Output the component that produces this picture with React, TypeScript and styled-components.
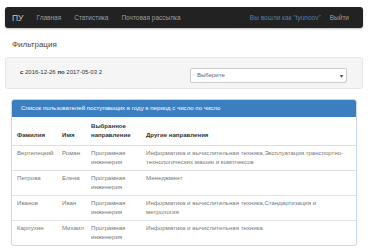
import styled, { createGlobalStyle } from "styled-components";

const GlobalStyle = createGlobalStyle`
  html, body {
    margin: 0;
    padding: 0;
    background: #ffffff;
  }

  body {
    font-family: "Liberation Sans", Arial, sans-serif;
    color: #333333;
  }
`;

interface Applicant {
  lastName: string;
  firstName: string;
  chosen: string;
  other: string;
}

const applicants: Applicant[] = [
  {
    lastName: "Вертелецкий",
    firstName: "Роман",
    chosen: "Програмная инженерия",
    other:
      "Информатика и вычислительная техника,Эксплуатация транспортно-технологических машин и комплексов",
  },
  {
    lastName: "Петрова",
    firstName: "Елена",
    chosen: "Програмная инженерия",
    other: "Менеджмент",
  },
  {
    lastName: "Иванов",
    firstName: "Иван",
    chosen: "Програмная инженерия",
    other: "Информатика и вычислительная техника,Стандартизация и метрология",
  },
  {
    lastName: "Карпухин",
    firstName: "Михаил",
    chosen: "Програмная инженерия",
    other: "Информатика и вычислительная техника",
  },
];

export default function App() {
  return (
    <>
      <GlobalStyle />
      <Page>
        <Navbar>
          <Brand>ПУ</Brand>
          <NavLink>Главная</NavLink>
          <NavLink>Статистика</NavLink>
          <NavLink>Почтовая рассылка</NavLink>
          <NavRight>
            <UserLink>Вы вошли как "tyunoov"</UserLink>
            <NavLink>Выйти</NavLink>
          </NavRight>
        </Navbar>

        <Heading>Фильтрация</Heading>

        <Well>
          <Period>
            <b>с</b> 2016-12-26 <b>по</b> 2017-05-03 2
          </Period>
          <Select>
            <span>Выберите</span>
            <Caret>▾</Caret>
          </Select>
        </Well>

        <Panel>
          <PanelHeading>
            Список пользователей поступающих в году в период с число по число
          </PanelHeading>
          <Table>
            <colgroup>
              <col style={{ width: 45 }} />
              <col style={{ width: 29 }} />
              <col style={{ width: 55 }} />
              <col />
            </colgroup>
            <thead>
              <tr>
                <Th>Фамилия</Th>
                <Th>Имя</Th>
                <Th>
                  Выбранное
                  <br />
                  направление
                </Th>
                <Th $last>Другие направления</Th>
              </tr>
            </thead>
            <tbody>
              {applicants.map((a) => (
                <tr key={a.lastName}>
                  <Td>{a.lastName}</Td>
                  <Td>{a.firstName}</Td>
                  <Td>{a.chosen}</Td>
                  <Td $last>{a.other}</Td>
                </tr>
              ))}
            </tbody>
          </Table>
        </Panel>
      </Page>
    </>
  );
}

const Page = styled.div`
  padding: 7px 5px 0;
`;

const Navbar = styled.nav`
  display: flex;
  align-items: center;
  gap: 13px;

  height: 21px;
  padding: 0 14px 0 7px;
  border-radius: 3px;
  background: #222222;
  box-shadow: 0 1px 2px rgba(0, 0, 0, 0.25);
`;

const Brand = styled.span`
  font-size: 8.5px;
  color: #c8c8c8;
`;

const NavLink = styled.span`
  font-size: 6.5px;
  color: #9d9d9d;
`;

const NavRight = styled.div`
  display: flex;
  align-items: center;
  gap: 9px;
  margin-left: auto;
`;

const UserLink = styled.span`
  font-size: 6.5px;
  color: #4f7fb0;
`;

const Heading = styled.h3`
  margin: 12px 0 0 7px;
  font-size: 8px;
  font-weight: normal;
  line-height: 10px;
  color: #444444;
`;

const Well = styled.div`
  display: flex;
  align-items: center;

  height: 30px;
  margin-top: 7px;
  padding: 0 15px 0 14px;
  border: 1px solid #e6e6e6;
  border-radius: 3px;
  background: #f5f5f5;
`;

const Period = styled.div`
  font-size: 6px;
  color: #333333;
  margin-top: -3px;
  width: 170px;
`;

const Select = styled.div`
  display: flex;
  align-items: center;
  justify-content: space-between;
  box-sizing: border-box;

  width: 157px;
  height: 15px;
  margin-top: 4px;
  padding: 0 3px 0 6px;
  border: 1px solid #cccccc;
  border-radius: 2px;
  background: #ffffff;
  font-size: 6px;
  color: #666666;
`;

const Caret = styled.span`
  font-size: 6px;
  color: #444444;
`;

const Panel = styled.section`
  margin: 10px 6px 0;
  border: 1px solid #c9d9e6;
  border-radius: 3px;
  background: #ffffff;
  box-shadow: 0 1px 2px rgba(0, 0, 0, 0.06);
  overflow: hidden;
`;

const PanelHeading = styled.div`
  height: 17px;
  padding: 0 9px;
  background: #3a80c1;
  color: #ffffff;
  font-size: 6.1px;
  line-height: 16px;
`;

const Table = styled.table`
  width: 100%;
  border-collapse: collapse;
  table-layout: fixed;
  font-size: 6.1px;
`;

const Th = styled.th<{ $last?: boolean }>`
  padding: 4px ${(p) => (p.$last ? "10px" : "5px")} 6px 5px;
  text-align: left;
  vertical-align: bottom;
  font-weight: bold;
  line-height: 9px;
  color: #333333;
  border-bottom: 1px solid #dddddd;
`;

const Td = styled.td<{ $last?: boolean }>`
  padding: 3px ${(p) => (p.$last ? "10px" : "5px")} 4px 5px;
  vertical-align: top;
  line-height: 8.5px;
  color: #777777;
  border-top: 1px solid #e2e2e2;
`;
